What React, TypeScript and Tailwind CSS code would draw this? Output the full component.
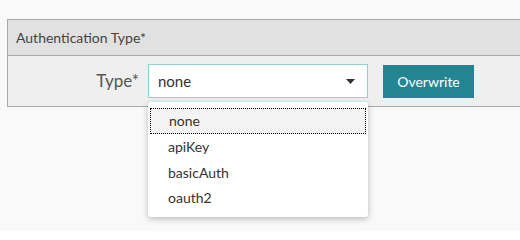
import React from 'react';

const options = ['none', 'apiKey', 'basicAuth', 'oauth2'];

export default function App() {
  return (
    <div
      className="relative h-[231px] w-[520px] overflow-hidden bg-[#f9f9f9] pl-[7px] pt-[19px]"
      style={{ fontFamily: 'Lato, "Open Sans", sans-serif' }}
    >
      {/* Section box */}
      <div className="w-[560px] border border-[#a8a8a8] bg-[#efefef]">
        <div className="flex h-[36px] items-center border-b border-[#a8a8a8] bg-[#e1e1e1] pl-[8px] text-[14px] text-[#444]">
          Authentication Type*
        </div>
        <div className="flex h-[50px] items-center">
          <div className="w-[132px] pr-[1px] text-right text-[17px] text-[#555]">Type*</div>
          <div className="ml-[8px] flex h-[34px] w-[220px] items-center justify-between border border-[#8fd3ca] bg-white pl-[9px] pr-[12px] text-[15px] text-[#333]">
            <span>none</span>
            <svg width="9" height="5" viewBox="0 0 9 5">
              <path d="M0 0h9L4.5 5z" fill="#333" />
            </svg>
          </div>
          <button className="ml-[15px] mt-[1px] h-[33px] w-[91px] bg-[#238592] text-[14px] text-white">
            Overwrite
          </button>
        </div>
      </div>

      {/* Dropdown menu */}
      <div className="absolute left-[148px] top-[102px] w-[220px] rounded-[3px] bg-white px-[2px] pb-[6px] pt-[6px] shadow-[0_2px_6px_rgba(0,0,0,0.25)]">
        {options.map((opt, i) => (
          <div
            key={opt}
            className={`flex h-[25.7px] items-center pl-[18px] text-[14px] text-[#333] ${
              i === 0 ? 'border border-dotted border-black bg-[#f3f3f3]' : ''
            }`}
          >
            {opt}
          </div>
        ))}
      </div>
    </div>
  );
}
